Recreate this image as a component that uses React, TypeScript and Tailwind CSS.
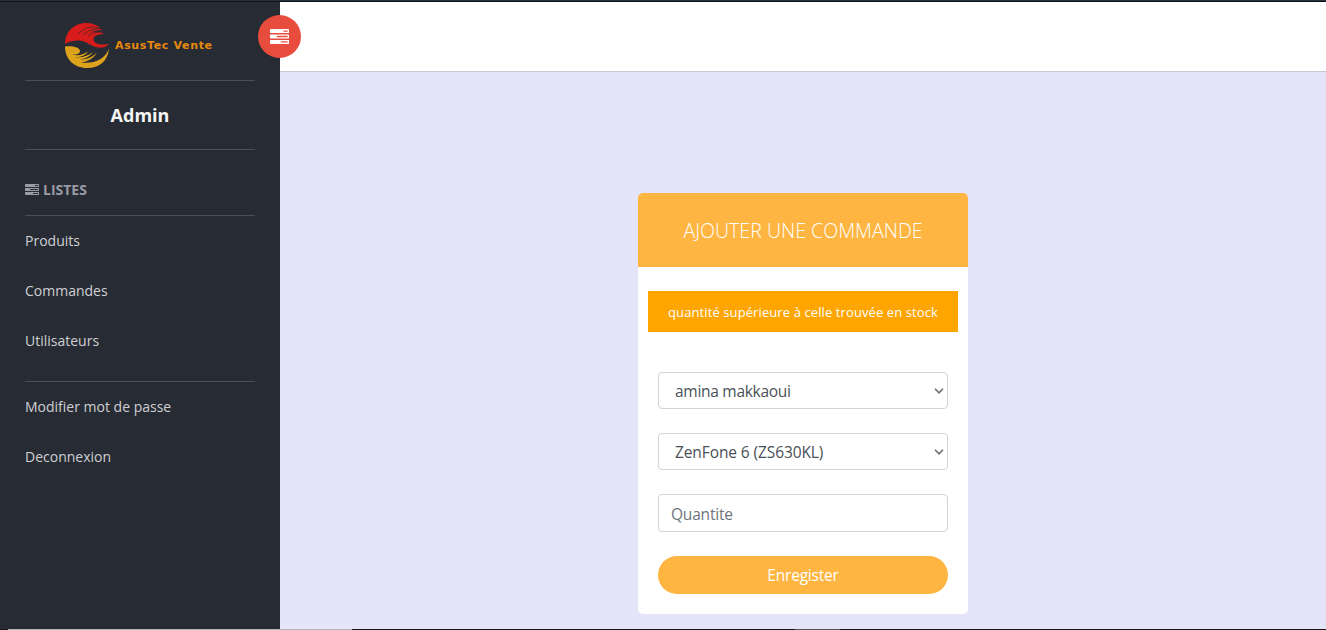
import React from 'react';

function TasksIcon({ className }: { className: string }) {
  return (
    <svg viewBox="0 128 1792 1408" className={className} fill="currentColor" aria-hidden="true">
      <path d="M1024 1408h640v-128h-640v128zM640 896h1024v-128h-1024v128zM1280 384h384v-128h-384v128zM1792 1216v256q0 26-19 45t-45 19h-1664q-26 0-45-19t-19-45v-256q0-26 19-45t45-19h1664q26 0 45 19t19 45zM1792 704v256q0 26-19 45t-45 19h-1664q-26 0-45-19t-19-45v-256q0-26 19-45t45-19h1664q26 0 45 19t19 45zM1792 192v256q0 26-19 45t-45 19h-1664q-26 0-45-19t-19-45v-256q0-26 19-45t45-19h1664q26 0 45 19t19 45z" />
    </svg>
  );
}

function Logo() {
  return (
    <svg viewBox="0 0 46 46" className="h-[46px] w-[46px] shrink-0" fill="none" aria-hidden="true">
      <path
        fill="#d81b1b"
        d="M1 22C1 10 10 1 22 1c6 0 11 2 15 5-4-.8-7-.5-10 .7 5-1 9-.2 12 1.800-5-.8-9 .3-12 2 5-1.300 9-1 13 1.500-7 .2-11 2-10.500 5.500C30 21.500 35 23.500 45 22c-3 3.500-8 4.500-13 3C25 23 21 18 13 18.500 8 18.800 4 20 1 22z"
      />
      <path stroke="#272b33" strokeWidth=".6" d="M14 11.500Q21 5 30 4.500M19 12.500Q25 7.500 33 7M24 13.500Q29 10 36 10" />
      <path
        fill="#dda31c"
        d="M1 24.500c6-1 15 .3 15 4.500 0 3-4 4-8 3.500 6 1.500 11 .5 16-3-3 4.500-8 6-13 5.500 7 1 13-1 18-5-4 5.500-9 7.500-15 7.500 8 .5 14-2 19-7-4 6.500-9 9-16 10 13 1.500 24-3 28-14-1 12-9 19.500-22 19.500C10 46 1 37 1 24.500z"
      />
    </svg>
  );
}

function SelectBox({ value, textClass }: { value: string; textClass: string }) {
  return (
    <div className="flex h-[37px] items-center justify-between rounded-[4px] border border-[#ced4da] pr-[3px] pl-4 text-[#495057]">
      <span className={textClass}>{value}</span>
      <svg viewBox="0 0 10 6" className="h-[6px] w-[10px]" fill="none" stroke="#6c7074" strokeWidth="1.600" aria-hidden="true">
        <path d="M1 .8l4 4 4-4" />
      </svg>
    </div>
  );
}

function NavLink({ children }: { children: string }) {
  return <a className="flex h-[50px] items-center pb-[2px]">{children}</a>;
}

export default function App() {
  return (
    <div className="flex h-[630px] w-[1326px] flex-col overflow-hidden font-['Open_Sans','Noto_Sans',sans-serif]">
      <div className="h-[2px] shrink-0 border-b border-[#0b1016] bg-[#26343d]" />
      <div className="flex min-h-0 grow">
        <aside className="relative w-[280px] shrink-0 bg-[#272b33] px-[25px] text-[14px] text-[#cfd0d3]">
          <div className="flex h-[79px] items-center border-b border-[#4d4f52] pt-[7px] pl-[39px]">
            <Logo />
            <span className="ml-[5px] pt-[3px] font-['DejaVu_Sans',sans-serif] text-[11px] font-bold tracking-[0.65px] whitespace-nowrap text-[#e8890c]">
              AsusTec Vente
            </span>
          </div>
          <div className="flex h-[69px] items-center justify-center border-b border-[#4d4f52] text-[18px] font-bold text-[#f5f5f5]">Admin</div>
          <div className="flex h-[66px] items-center gap-1 border-b border-[#4d4f52] pt-[13px] font-bold text-[#9a9ba5]">
            <TasksIcon className="h-[11px] w-[14px]" />
            LISTES
          </div>
          <nav className="h-[166px] border-b border-[#4d4f52]">
            <NavLink>Produits</NavLink>
            <NavLink>Commandes</NavLink>
            <NavLink>Utilisateurs</NavLink>
          </nav>
          <nav>
            <NavLink>Modifier mot de passe</NavLink>
            <NavLink>Deconnexion</NavLink>
          </nav>
          <button className="absolute top-[13px] left-[258px] z-10 flex h-[43px] w-[43px] items-center justify-center rounded-full bg-[#e84c3d] text-white">
            <TasksIcon className="h-[15px] w-[19px]" />
          </button>
        </aside>
        <div className="flex grow flex-col">
          <header className="h-[70px] shrink-0 border-b border-[#c8c9d4] bg-white" />
          <main className="flex grow justify-center bg-[#e4e5f9] pt-[121px]">
            <form className="h-[421px] w-[330px] overflow-hidden rounded-[5px] bg-white">
              <h1 className="flex h-[74px] items-center justify-center bg-[#ffb541] pt-[2px] text-[19.600px] font-light text-white">
                AJOUTER UNE COMMANDE
              </h1>
              <p className="mx-[10px] mt-6 flex h-[41px] items-center justify-center bg-[#ffa500] pt-[2px] text-[13px] tracking-[0.1px] text-white">
                quantité supérieure à celle trouvée en stock
              </p>
              <div className="mx-5 mt-10 flex flex-col gap-6">
                <SelectBox value="amina makkaoui" textClass="pt-px text-[15.500px] leading-6 tracking-[-0.28px]" />
                <SelectBox value="ZenFone 6 (ZS630KL)" textClass="pt-px text-[15.500px] leading-6 tracking-[-0.1px]" />
                <input
                  placeholder="Quantite"
                  className="h-[38px] rounded-[4px] border border-[#ced4da] px-3 pt-[2px] text-[15.500px] tracking-[-0.2px] placeholder:text-[#6c757d]"
                />
                <button type="button" className="h-[38px] rounded-full bg-[#ffb541] pt-[2px] text-[15.500px] tracking-[-0.2px] text-white">
                  Enregister
                </button>
              </div>
            </form>
          </main>
        </div>
      </div>
      <div className="flex h-px shrink-0 bg-[#1b1318]">
        <div className="ml-2 h-px w-[344px] bg-[#b5b5b7]" />
        <div className="ml-[443px] h-px w-[45px] bg-[#555456]" />
      </div>
    </div>
  );
}
